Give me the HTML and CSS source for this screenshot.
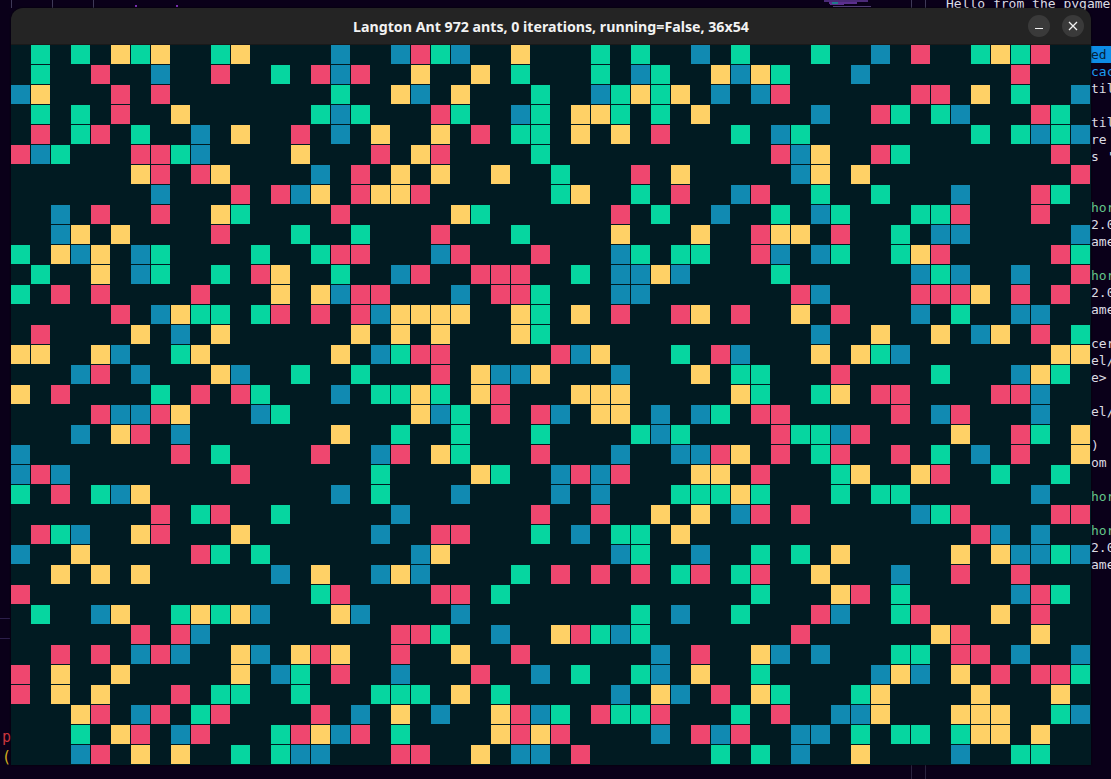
FILE: index.html
```html
<!DOCTYPE html>
<html>
  <head>
    <meta name="viewport" content="width=device-width, initial-scale=1.0" />
    <title>Langton Ant</title>
    <link rel="stylesheet" href="styles.css">
  </head>
  <body>
    <main id="desktop">
      <i class="rule" style="left: 11px"></i>
      <i class="rule" style="left: 52px"></i>
      <i class="rule" style="left: 93px"></i>
      <i class="rule" style="left: 911px"></i>
      <i class="rule" style="left: 925px"></i>
      <i class="rule low" style="left: 911px"></i>
      <i class="rule low" style="left: 925px"></i>
      <i class="tick" style="left: 135px"></i>
      <i class="tick" style="left: 176px"></i>
      <i class="sep" style="top: 618px"></i>
      <i class="sep" style="top: 638px"></i>

      <svg id="minimap" width="48" height="8" viewBox="0 0 48 8">
        <rect x="0" y="0" width="44" height="2" fill="#4b2a78"/>
        <rect x="5" y="2" width="28" height="2" fill="#5b2f8f"/>
        <rect x="8" y="2" width="6" height="2" fill="#1f7a8c"/>
        <rect x="6" y="4" width="14" height="1" fill="#5b2f8f"/>
        <rect x="9" y="6" width="38" height="1" fill="#54407a"/>
      </svg>

      <section id="term">
        <div class="line">Hello from the pygame</div>
        <div class="tail">
          <div class="line">&nbsp;</div>
          <div class="line">&nbsp;</div>
          <div class="line selected">ed&nbsp;</div>
          <div class="line link">cac</div>
          <div class="line">til</div>
          <div class="line">&nbsp;</div>
          <div class="line">til</div>
          <div class="line">re</div>
          <div class="line">s '</div>
          <div class="line">&nbsp;</div>
          <div class="line">&nbsp;</div>
          <div class="line prompt">hor</div>
          <div class="line">2.0</div>
          <div class="line">ame</div>
          <div class="line">&nbsp;</div>
          <div class="line prompt">hor</div>
          <div class="line">2.0</div>
          <div class="line">ame</div>
          <div class="line">&nbsp;</div>
          <div class="line">cer</div>
          <div class="line">el/</div>
          <div class="line">e&gt;</div>
          <div class="line">&nbsp;</div>
          <div class="line">el/</div>
          <div class="line">&nbsp;</div>
          <div class="line">)</div>
          <div class="line">om</div>
          <div class="line">&nbsp;</div>
          <div class="line prompt">hor</div>
          <div class="line">&nbsp;</div>
          <div class="line prompt">hor</div>
          <div class="line">2.0</div>
          <div class="line">ame</div>
        </div>
      </section>

      <section id="editor">
        <div class="kw">p</div>
        <div class="paren">()</div>
      </section>

      <section id="window">
        <header>
          <h1>Langton Ant 972 ants, 0 iterations, running=False, 36x54</h1>
          <nav>
            <button aria-label="Minimize">
              <svg width="10" height="10" viewBox="0 0 10 10"><path d="M1 7.5h8" stroke="#f2f2f2" stroke-width="1.2"/></svg>
            </button>
            <button aria-label="Close">
              <svg width="10" height="10" viewBox="0 0 10 10"><path d="M1 1l8 8M9 1l-8 8" stroke="#f2f2f2" stroke-width="1.3"/></svg>
            </button>
          </nav>
        </header>
        <div id="grid"></div>
      </section>
    </main>
    <script src="app.js"></script>
  </body>
</html>
```
FILE: styles.css
```css
html {
  height: 100%;
  padding: 0;
  margin: 0;
  border: 0;
}
body {
  height: 100%;
  margin: 0;
  padding: 0;
  border: 0;
  overflow: hidden;
  background-color: #0a0019;
}
#desktop {
  position: relative;
  width: 1111px;
  height: 779px;
  overflow: hidden;
}

.rule {
  position: absolute;
  top: 0;
  width: 1px;
  height: 8px;
  background-color: #3f3a58;
}
.rule.low {
  top: 765px;
  height: 14px;
  background-color: #2b2440;
}
.tick {
  position: absolute;
  top: 5px;
  width: 2px;
  height: 2px;
  background-color: #7a2fb0;
}
.sep {
  position: absolute;
  left: 0;
  width: 10px;
  height: 1px;
  background-color: #2c1f4a;
}
#minimap {
  position: absolute;
  left: 824px;
  top: 0;
}

#term {
  position: absolute;
  left: 946px;
  top: -5px;
  width: 165px;
  overflow: hidden;
  font-family: "DejaVu Sans Mono", monospace;
  font-size: 13px;
  color: #dcdce4;
}
.line {
  height: 17px;
  line-height: 17px;
  white-space: pre;
}
.tail {
  margin-left: 145px;
}
.selected {
  background-color: #0d8ce6;
  color: #06243c;
}
.link {
  color: #1c9cf2;
}
.prompt {
  color: #63c58a;
}

#editor {
  position: absolute;
  left: 2px;
  top: 729px;
  font-family: "DejaVu Sans Mono", monospace;
  font-size: 15px;
}
.kw {
  height: 20px;
  line-height: 17px;
  color: #c9353d;
}
.paren {
  line-height: 17px;
  color: #d0aa20;
}

#window {
  position: absolute;
  left: 11px;
  top: 8px;
  width: 1080px;
  height: 757px;
  display: flex;
  flex-flow: column;
  border-radius: 12px 12px 0 0;
  overflow: hidden;
  box-shadow: 0 0 2px #000;
}
#window header {
  flex: none;
  height: 36px;
  display: flex;
  align-items: center;
  justify-content: center;
  position: relative;
  background-color: #242424;
  border-bottom: 1px solid #1a1a1a;
}
#window h1 {
  margin: 1px 0 0;
  font-family: "Noto Sans", sans-serif;
  font-size: 14.2px;
  font-weight: 700;
  color: #f2f2f2;
}
#window nav {
  position: absolute;
  right: 7px;
  top: 7px;
  display: flex;
  gap: 12px;
}
#window button {
  width: 22px;
  height: 22px;
  padding: 0;
  border: 0;
  border-radius: 50%;
  display: flex;
  align-items: center;
  justify-content: center;
  background-color: #3a3a3a;
}

#grid {
  flex: 1;
  display: grid;
  grid-template-columns: repeat(54, 19px);
  grid-auto-rows: 19px;
  gap: 1px;
  background-color: #011b22;
}
.g { background-color: #06d6a0; }
.y { background-color: #ffd166; }
.b { background-color: #118ab2; }
.r { background-color: #ef476f; }
```
FILE: app.js
```js
// one string per row, . is an empty cell
const rows = [
  ".g.g.ygy..gy....b." + ".brgb..y...g.g..b." + "g...g..b.r..gygr..",
  ".g..r..b..r..g.rbr" + "..y..y.g...g.bg..y" + "byg...b.......r...",
  "by...r.r........g." + ".yb.y...g..bgygy.b" + ".br......rr.y.g..b",
  ".g.g.r..y......gbg" + "...rg..bg.yyg.g.y." + "....b..rg.gb...rg.",
  ".r.gr.g..b.y..r.b." + "y..y.r.gg.y.y.r..." + "g.bg........g.gbgb",
  "rbg...rrgb....y..." + "r.yr....g........." + "..rby..rg.......r.",
  "......yr.ry....b.r" + ".y.y..y..g...r.y.." + "...by.y..........r",
  ".......b...r.rby.r" + "yyr......gy..g.r.." + "br..g..g...b...rg.",
  "..b.r..r..yg....r." + "....yg......r.g..b" + "..g.bg...ggr...r..",
  "..by.y....r...g..g" + "...r...g....y...y." + ".ryy.r..g.bb.....b",
  "g.yby.bg....g..grr" + "...br...r...bg.gg." + ".rb.bg..gyr.....rg",
  ".g..y.bg..g.ry..g." + ".br..rrr..g.bbyb.." + "..g......bgb..b..r",
  "g.r.r....r...y.ybr" + "r...b.rrg...bb...." + "...rb....rrry.r.r.",
  ".....r.bygg.gr.r.r" + "byyyy..yg.y.r..ry." + "r..y.r...b.g..bb..",
  ".r....y.b.y......y" + ".y.y...yg........." + "....b..y..y.by.r.g",
  "yy..yb..gy......y." + "bgrr.....rby...g.r" + "b...y.ygb.......yy",
  "...br.b...yb..g..g" + "...r.ybby...b...y." + "gg...r....g...byg.",
  "y.r....g.r.rg...b." + "ggyg.yr...yyy....." + "yg..gy.rr....rrb..",
  "....rbbry...bg...." + "..ybg.r.rb.yy.b.bg" + ".rr.....r.br...b..",
  "...b.yr.b.......y." + ".g..g...g....gbg.." + "..rggbr....y..rg.y",
  "b.......r.g....r.." + "br.yg...r...b..bbr" + "y.r.gr..r.g.b.r..y",
  "brb........r......" + "g....yg..brbr...yy" + ".r...gy..yr..g..g.",
  "g.r.gby.........b." + "g...b....b.b...ggg" + "yg...g.gg......b..",
  ".......r.gr..g...." + ".b......r..r..y.y." + "br.r.....bgr....rr",
  ".rgb..yr...y......" + "b..rr...g.b.gg.y.." + "............rb.b..",
  "b..y.....rg.g....." + "..by........bg..b." + ".g.g.y.....y.ybbgb",
  "..y.y.y......b.y.." + "byb....g.r.r.r.gr." + "gr..y...b..r..r...",
  "r..............gr." + "...rr.g..........." + ".g...yr.g.....brg.",
  ".g..by..gygyb...yb" + "....b........g.b.." + "g...rb..gr...y.r..",
  "......r.rb........" + ".rrg..b..yrgbg...." + "...r......yr...y..",
  "..r.r.brb..yb.yry." + ".r..y..r......b.r." + ".yb.b...gg.rr.b..b",
  "r.y..y.....y.bg.r." + ".b...r..b.g..gb.y." + ".g.....byb.y.r.rrg",
  "r.y.y...r.gg..g..." + "ggg.y.g.....b.yb.r" + ".yg...gy....y...y.",
  "...yr.br.gr....r.b" + ".y.b..yrbg.rggr..." + "g.r..bby...yyy..gb",
  "...g.yr.br...grybr" + ".g....yryr....b.rb" + "r..bb.g.gg.gyy.y..",
  "...br.y.y..g.gbb.." + ".rr..y.bb.r......g" + ".g.b..y....b..gg..",
];

const grid = document.getElementById("grid");
for (const row of rows) {
  for (const c of row) {
    const cell = document.createElement("div");
    if (c !== ".") cell.className = c;
    grid.appendChild(cell);
  }
}
```
